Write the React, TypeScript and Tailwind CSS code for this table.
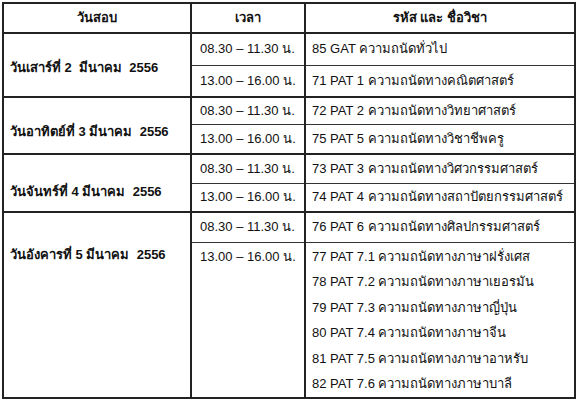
import React from "react";

type Group = {
  day: string;
  dayPad: string;
  rows: { time: string; subjects: string[]; h: number }[];
};

const groups: Group[] = [
  {
    day: "วันเสาร์ที่ 2  มีนาคม  2556",
    dayPad: "align-middle pt-[6px]",
    rows: [
      { time: "08.30 – 11.30 น.", subjects: ["85 GAT ความถนัดทั่วไป"], h: 32 },
      { time: "13.00 – 16.00 น.", subjects: ["71 PAT 1 ความถนัดทางคณิตศาสตร์"], h: 32 },
    ],
  },
  {
    day: "วันอาทิตย์ที่ 3 มีนาคม  2556",
    dayPad: "align-middle pt-[12px]",
    rows: [
      { time: "08.30 – 11.30 น.", subjects: ["72 PAT 2 ความถนัดทางวิทยาศาสตร์"], h: 27 },
      { time: "13.00 – 16.00 น.", subjects: ["75 PAT 5 ความถนัดทางวิชาชีพครู"], h: 30 },
    ],
  },
  {
    day: "วันจันทร์ที่ 4 มีนาคม  2556",
    dayPad: "align-middle pt-[18px]",
    rows: [
      { time: "08.30 – 11.30 น.", subjects: ["73 PAT 3 ความถนัดทางวิศวกรรมศาสตร์"], h: 29 },
      { time: "13.00 – 16.00 น.", subjects: ["74 PAT 4 ความถนัดทางสถาปัตยกรรมศาสตร์"], h: 29 },
    ],
  },
  {
    day: "วันอังคารที่ 5 มีนาคม  2556",
    dayPad: "align-top pt-[34px]",
    rows: [
      { time: "08.30 – 11.30 น.", subjects: ["76 PAT 6 ความถนัดทางศิลปกรรมศาสตร์"], h: 30 },
      {
        time: "13.00 – 16.00 น.",
        subjects: [
          "77 PAT 7.1 ความถนัดทางภาษาฝรั่งเศส",
          "78 PAT 7.2 ความถนัดทางภาษาเยอรมัน",
          "79 PAT 7.3 ความถนัดทางภาษาญี่ปุ่น",
          "80 PAT 7.4 ความถนัดทางภาษาจีน",
          "81 PAT 7.5 ความถนัดทางภาษาอาหรับ",
          "82 PAT 7.6 ความถนัดทางภาษาบาลี",
        ],
        h: 156,
      },
    ],
  },
];

export default function App() {
  return (
    <div
      className="w-[580px] h-[401px] bg-white pt-[2px] pl-[2px] text-[13px] leading-[16px] text-[#111] overflow-hidden"
      style={{ fontFamily: "'Liberation Sans', Arial, sans-serif" }}
    >
      <table className="w-[574px] border-collapse border-2 border-[#222] table-fixed">
        <colgroup>
          <col className="w-[188px]" />
          <col className="w-[114px]" />
          <col />
        </colgroup>
        <thead>
          <tr className="h-[30px]">
            <th className="border-2 border-[#222] text-center font-bold p-0">วันสอบ</th>
            <th className="border-2 border-[#222] text-center font-bold p-0">เวลา</th>
            <th className="border-2 border-[#222] text-center font-bold p-0">รหัส และ ชื่อวิชา</th>
          </tr>
        </thead>
        <tbody>
          {groups.map((g, gi) =>
            g.rows.map((r, ri) => (
              <tr
                key={`${gi}-${ri}`}
                style={{ height: r.h }}
                className={ri === 0 ? "border-t-2 border-[#222]" : "border-t border-[#333]"}
              >
                {ri === 0 && (
                  <td
                    rowSpan={g.rows.length}
                    className={`border-2 border-[#222] p-0 pl-[6px] font-bold whitespace-pre ${g.dayPad}`}
                  >
                    {g.day}
                  </td>
                )}
                <td
                  className={`border-x-2 border-[#222] p-0 pl-[8px] whitespace-nowrap ${
                    r.subjects.length > 1 ? "align-top pt-[6px]" : "align-middle"
                  }`}
                >
                  {r.time}
                </td>
                <td
                  className={`border-x-2 border-[#222] p-0 pl-[6px] whitespace-nowrap ${
                    r.subjects.length > 1 ? "align-top pt-[1px]" : "align-middle"
                  }`}
                >
                  {r.subjects.length > 1 ? (
                    <div className="flex flex-col">
                      {r.subjects.map((s) => (
                        <div key={s} className="h-[25.6px] leading-[25.6px]">
                          {s}
                        </div>
                      ))}
                    </div>
                  ) : (
                    r.subjects[0]
                  )}
                </td>
              </tr>
            ))
          )}
        </tbody>
      </table>
    </div>
  );
}
